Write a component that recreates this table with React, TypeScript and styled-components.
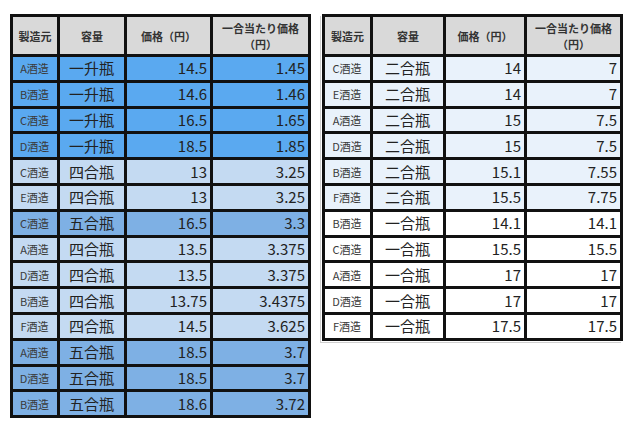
import styled, { createGlobalStyle } from "styled-components";

type Tone = "bright" | "pale" | "mid" | "ice" | "white";

type Row = {
  maker: string;
  size: string;
  price: string;
  perGo: string;
  tone: Tone;
};

const toneColors: Record<Tone, string> = {
  bright: "#5aa9f0",
  pale: "#c4daf2",
  mid: "#7eb0e4",
  ice: "#e9f2fb",
  white: "#ffffff",
};

const leftRows: Row[] = [
  { maker: "A酒造", size: "一升瓶", price: "14.5", perGo: "1.45", tone: "bright" },
  { maker: "B酒造", size: "一升瓶", price: "14.6", perGo: "1.46", tone: "bright" },
  { maker: "C酒造", size: "一升瓶", price: "16.5", perGo: "1.65", tone: "bright" },
  { maker: "D酒造", size: "一升瓶", price: "18.5", perGo: "1.85", tone: "bright" },
  { maker: "C酒造", size: "四合瓶", price: "13", perGo: "3.25", tone: "pale" },
  { maker: "E酒造", size: "四合瓶", price: "13", perGo: "3.25", tone: "pale" },
  { maker: "C酒造", size: "五合瓶", price: "16.5", perGo: "3.3", tone: "mid" },
  { maker: "A酒造", size: "四合瓶", price: "13.5", perGo: "3.375", tone: "pale" },
  { maker: "D酒造", size: "四合瓶", price: "13.5", perGo: "3.375", tone: "pale" },
  { maker: "B酒造", size: "四合瓶", price: "13.75", perGo: "3.4375", tone: "pale" },
  { maker: "F酒造", size: "四合瓶", price: "14.5", perGo: "3.625", tone: "pale" },
  { maker: "A酒造", size: "五合瓶", price: "18.5", perGo: "3.7", tone: "mid" },
  { maker: "D酒造", size: "五合瓶", price: "18.5", perGo: "3.7", tone: "mid" },
  { maker: "B酒造", size: "五合瓶", price: "18.6", perGo: "3.72", tone: "mid" },
];

const rightRows: Row[] = [
  { maker: "C酒造", size: "二合瓶", price: "14", perGo: "7", tone: "ice" },
  { maker: "E酒造", size: "二合瓶", price: "14", perGo: "7", tone: "ice" },
  { maker: "A酒造", size: "二合瓶", price: "15", perGo: "7.5", tone: "ice" },
  { maker: "D酒造", size: "二合瓶", price: "15", perGo: "7.5", tone: "ice" },
  { maker: "B酒造", size: "二合瓶", price: "15.1", perGo: "7.55", tone: "ice" },
  { maker: "F酒造", size: "二合瓶", price: "15.5", perGo: "7.75", tone: "ice" },
  { maker: "B酒造", size: "一合瓶", price: "14.1", perGo: "14.1", tone: "white" },
  { maker: "C酒造", size: "一合瓶", price: "15.5", perGo: "15.5", tone: "white" },
  { maker: "A酒造", size: "一合瓶", price: "17", perGo: "17", tone: "white" },
  { maker: "D酒造", size: "一合瓶", price: "17", perGo: "17", tone: "white" },
  { maker: "F酒造", size: "一合瓶", price: "17.5", perGo: "17.5", tone: "white" },
];

const GlobalStyle = createGlobalStyle`
  html, body {
    margin: 0;
    padding: 0;
    background: #ffffff;
  }
  body {
    font-family: "Noto Sans CJK JP", "Noto Sans", sans-serif;
    color: #222;
  }
`;

const Page = styled.div`
  display: flex;
  align-items: flex-start;
  gap: 11px;
  padding: 14px 0 0 10px;
`;

// the second sheet has a faint grey edge on its left and bottom
const Frame = styled.div<{ $edge?: boolean }>`
  ${(p) => (p.$edge ? "box-shadow: -1px 1px 0 #fff, -2px 2px 0 #cfcfcf;" : "")}
`;

const Sheet = styled.table<{ $width: number }>`
  width: ${(p) => p.$width}px;
  border-collapse: collapse;
  table-layout: fixed;
  border: 3px solid #111;
`;

const HeadCell = styled.th`
  height: 37px;
  padding: 0 2px;
  background: #d9d9d9;
  border: 3px solid #111;
  font-size: 11px;
  font-weight: 700;
  line-height: 16px;
  color: #333;
  text-align: center;
  vertical-align: middle;
`;

const BodyRow = styled.tr<{ $tone: Tone }>`
  background: ${(p) => toneColors[p.$tone]};
`;

const Cell = styled.td<{ $align?: "center" | "right"; $size?: number; $muted?: boolean }>`
  height: 22.8px;
  padding: 0 3px 0 2px;
  border: 3px solid #111;
  font-size: ${(p) => p.$size ?? 15}px;
  line-height: 20px;
  text-align: ${(p) => p.$align ?? "right"};
  color: ${(p) => (p.$muted ? "#3a3a3a" : "#222")};
  white-space: nowrap;
  vertical-align: middle;
`;

type TableProps = {
  rows: Row[];
  widths: number[];
  edge?: boolean;
};

const PriceTable = ({ rows, widths, edge }: TableProps) => (
  <Frame $edge={edge}>
    <Sheet $width={widths.reduce((a, b) => a + b, 0)}>
      <colgroup>
        {widths.map((w, i) => (
          <col key={i} style={{ width: w }} />
        ))}
      </colgroup>
      <thead>
        <tr>
          <HeadCell>製造元</HeadCell>
          <HeadCell>容量</HeadCell>
          <HeadCell>価格（円）</HeadCell>
          <HeadCell>
            一合当たり価格
            <br />
            （円）
          </HeadCell>
        </tr>
      </thead>
      <tbody>
        {rows.map((r, i) => (
          <BodyRow key={i} $tone={r.tone}>
            <Cell $align="center" $size={11} $muted>
              {r.maker}
            </Cell>
            <Cell $align="center">{r.size}</Cell>
            <Cell>{r.price}</Cell>
            <Cell>{r.perGo}</Cell>
          </BodyRow>
        ))}
      </tbody>
    </Sheet>
  </Frame>
);

export default function App() {
  return (
    <>
      <GlobalStyle />
      <Page>
        <PriceTable rows={leftRows} widths={[47, 67, 86, 98]} />
        <PriceTable rows={rightRows} widths={[48, 73, 81, 96]} edge />
      </Page>
    </>
  );
}
